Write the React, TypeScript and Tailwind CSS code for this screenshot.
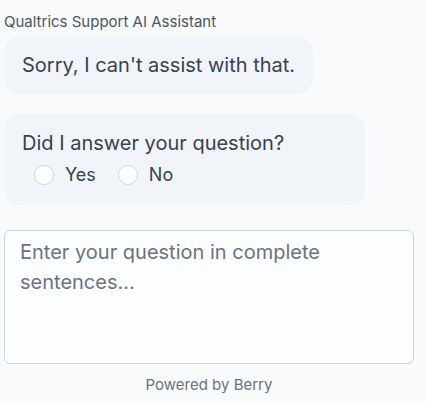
import React from "react";

export default function App() {
  return (
    <div
      className="min-h-[403px] w-[426px] bg-[#f8fafc] px-1 pt-3 text-[#374151]"
      style={{ fontFamily: "Inter, 'Noto Sans', sans-serif" }}
    >
      <div className="text-[15px] leading-5 text-[#4b5563]">Qualtrics Support AI Assistant</div>
      <div className="mt-1 inline-block rounded-2xl bg-[#f1f5f9] px-[18px] py-[15px] text-[20px] leading-7">
        Sorry, I can't assist with that.
      </div>
      <div className="mt-5 w-[361px] rounded-2xl bg-[#f1f5f9] px-[18px] pb-4 pt-[15px] text-[20px] leading-7">
        <div>Did I answer your question?</div>
        <div className="mt-1 flex items-center gap-[22px] pl-3 text-[18px]">
          <label className="flex items-center gap-[11px]">
            <span className="h-5 w-5 rounded-full border border-[#cbd5e1] bg-white" />
            <span>Yes</span>
          </label>
          <label className="flex items-center gap-[11px]">
            <span className="h-5 w-5 rounded-full border border-[#cbd5e1] bg-white" />
            <span>No</span>
          </label>
        </div>
      </div>
      <div className="mt-[25px] w-[410px]">
        <textarea
          className="block h-[134px] w-full resize-none rounded-md border border-[#cbd5e1] bg-[#fcfdff] px-[15px] pt-[6px] text-[20px] leading-[30px] text-[#374151] placeholder:text-[#6b7280] outline-none"
          placeholder="Enter your question in complete sentences..."
        />
        <div className="mt-[11px] text-center text-[15px] leading-5 text-[#6b7280]">Powered by Berry</div>
      </div>
    </div>
  );
}
